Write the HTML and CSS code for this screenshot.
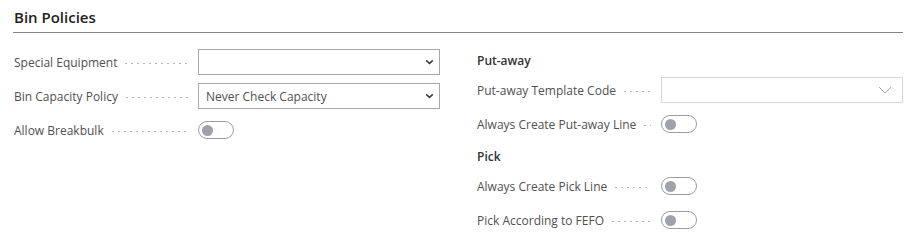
FILE: index.html
```html
<!DOCTYPE html>
<html lang="en">
<head>
    <meta charset="UTF-8">
    <title>Bin Policies</title>
    <link rel="stylesheet" href="styles.css">
</head>
<body>
    <div class="section">
        <h2 class="section-title">Bin Policies</h2>

        <div class="columns">
            <!-- left column -->
            <div class="column">
                <div class="field">
                    <div class="caption"><span class="label">Special Equipment</span><span class="leader"></span></div>
                    <div class="select">
                        <span class="value"></span>
                        <svg class="chevron" width="9" height="6" viewBox="0 0 9 6"><path d="M1.2 1.4 L4.5 4.4 L7.8 1.4" fill="none" stroke="#3a3a3a" stroke-width="1.5"/></svg>
                    </div>
                </div>
                <div class="field">
                    <div class="caption"><span class="label">Bin Capacity Policy</span><span class="leader"></span></div>
                    <div class="select">
                        <span class="value">Never Check Capacity</span>
                        <svg class="chevron" width="9" height="6" viewBox="0 0 9 6"><path d="M1.2 1.4 L4.5 4.4 L7.8 1.4" fill="none" stroke="#3a3a3a" stroke-width="1.5"/></svg>
                    </div>
                </div>
                <div class="field">
                    <div class="caption"><span class="label">Allow Breakbulk</span><span class="leader"></span></div>
                    <div class="control"><span class="toggle"><span class="knob"></span></span></div>
                </div>
            </div>

            <!-- right column -->
            <div class="column right">
                <div class="group-title">Put-away</div>
                <div class="field">
                    <div class="caption"><span class="label">Put-away Template Code</span><span class="leader"></span></div>
                    <div class="select disabled">
                        <span class="value"></span>
                        <svg class="chevron" width="14" height="8" viewBox="0 0 14 8"><path d="M1 1 L7 7 L13 1" fill="none" stroke="#a9acb2" stroke-width="1"/></svg>
                    </div>
                </div>
                <div class="field">
                    <div class="caption"><span class="label">Always Create Put-away Line</span><span class="leader"></span></div>
                    <div class="control"><span class="toggle"><span class="knob"></span></span></div>
                </div>

                <div class="group-title pick">Pick</div>
                <div class="field">
                    <div class="caption"><span class="label">Always Create Pick Line</span><span class="leader"></span></div>
                    <div class="control"><span class="toggle"><span class="knob"></span></span></div>
                </div>
                <div class="field">
                    <div class="caption"><span class="label">Pick According to FEFO</span><span class="leader"></span></div>
                    <div class="control"><span class="toggle"><span class="knob"></span></span></div>
                </div>
            </div>
        </div>
    </div>
</body>
</html>
```

FILE: styles.css
```css
body {
    margin: 0;
    padding: 0;
    background-color: #fff;
    font-family: 'Open Sans', 'Noto Sans', sans-serif;
    color: #505050;
}

.section {
    margin-left: 13px;
    width: 890px;
}

.section-title {
    margin: 0;
    padding: 7px 0 5px 1px;
    font-size: 15px;
    line-height: 20px;
    font-weight: 600;
    color: #212121;
    border-bottom: 1px solid #7d8391;
}

.columns {
    display: flex;
    margin-top: 16px;
    padding-left: 1px;
}

.column {
    width: 463px;
    display: flex;
    flex-direction: column;
    gap: 8px;
}

.column.right {
    width: 426px;
    padding-top: 2px;
}

.group-title {
    height: 20px;
    line-height: 20px;
    font-size: 12px;
    font-weight: 600;
    color: #333;
    margin-bottom: -2px;
}

.group-title.pick {
    margin-top: 2px;
}

.field {
    display: flex;
    align-items: center;
    height: 26px;
}

.caption {
    width: 184px;
    flex: 0 0 184px;
    display: flex;
    align-items: center;
}

.label {
    font-size: 12px;
    white-space: nowrap;
    color: #505050;
}

.leader {
    flex: 1;
    height: 1px;
    margin: 2px 10px 0 6px;
    background-image: radial-gradient(circle, #b5b5b5 0.6px, transparent 0.9px);
    background-size: 6px 1px;
    background-repeat: repeat-x;
}

.select {
    width: 242px;
    height: 26px;
    box-sizing: border-box;
    border: 1px solid #a8a8a8;
    display: flex;
    align-items: center;
    justify-content: space-between;
    padding: 0 5px 0 7px;
}

.select .value {
    font-size: 12px;
    color: #505050;
}

.select.disabled {
    border-color: #d4d6da;
    padding-right: 10px;
}

.control {
    width: 242px;
    display: flex;
    align-items: center;
}

.toggle {
    width: 36px;
    height: 18px;
    box-sizing: border-box;
    border: 1px solid #9c9c9c;
    border-radius: 10px;
    display: flex;
    align-items: center;
    padding-left: 3px;
}

.knob {
    width: 11px;
    height: 11px;
    border-radius: 50%;
    background-color: #9ea2aa;
}
```
